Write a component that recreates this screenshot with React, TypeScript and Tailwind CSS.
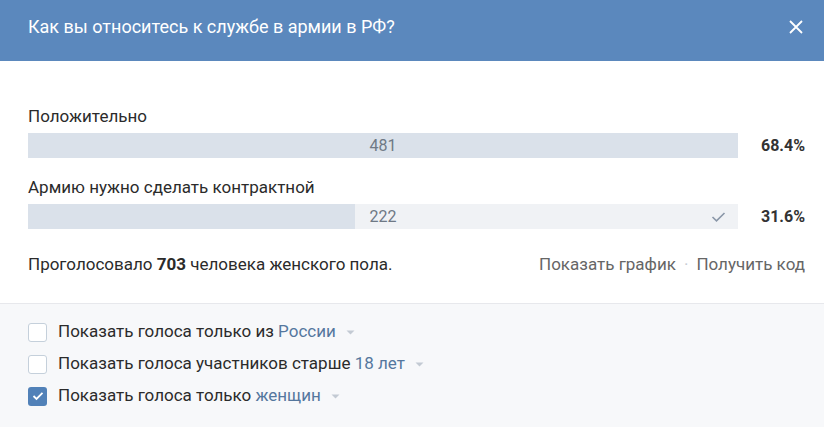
import { useState } from "react";

const font = { fontFamily: "Roboto, 'Noto Sans', sans-serif" };

type Answer = { text: string; votes: number; percent: string; share: number; mine?: boolean };

const answers: Answer[] = [
  { text: "Положительно", votes: 481, percent: "68.4%", share: 100 },
  { text: "Армию нужно сделать контрактной", votes: 222, percent: "31.6%", share: 46.1, mine: true },
];

function Bar({ a }: { a: Answer }) {
  return (
    <div className="mb-[19px]">
      <p className="h-[20px] text-[17px] leading-[20px] text-[#2b2b2b]">{a.text}</p>
      <div className="mt-[7px] flex items-center">
        <div className="relative h-[25px] w-[710px] bg-[#f0f2f5]">
          <div className="h-full bg-[#dae1ea]" style={{ width: `${a.share}%` }} />
          <span className="absolute inset-0 flex items-center justify-center text-[16px] text-[#6f7985]">
            {a.votes}
          </span>
          {a.mine ? (
            <svg className="absolute right-[12px] top-[7px]" width="15" height="12" viewBox="0 0 15 12">
              <path d="M1.5 6l4 3.8L13.5 2" fill="none" stroke="#8a97a8" strokeWidth="1.6" />
            </svg>
          ) : null}
        </div>
        <span className="ml-auto text-[16px] font-bold text-[#333]">{a.percent}</span>
      </div>
    </div>
  );
}

function Check({ checked, label, accent }: { checked: boolean; label: string; accent: string }) {
  const [on, setOn] = useState(checked);
  return (
    <button type="button" onClick={() => setOn(!on)} className="flex h-[32px] items-center text-left">
      {on ? (
        <span className="flex h-[19px] w-[19px] items-center justify-center rounded-[3px] bg-[#5181b8]">
          <svg width="12" height="10" viewBox="0 0 12 10">
            <path d="M1.5 5l3 3L10.5 1.8" fill="none" stroke="#fff" strokeWidth="1.8" />
          </svg>
        </span>
      ) : (
        <span className="h-[19px] w-[19px] rounded-[3px] border border-[#c5d0db] bg-white" />
      )}
      <span className="ml-[11px] text-[17px] text-[#2b2b2b]">
        {label} <span className="text-[#55779e]">{accent}</span>
      </span>
      <svg className="ml-[10px]" width="9" height="5" viewBox="0 0 9 5">
        <path d="M0.5 0.5h8L4.5 4.5z" fill="#c3cad3" />
      </svg>
    </button>
  );
}

export default function App() {
  return (
    <div className="h-[427px] w-[824px] bg-white" style={font}>
      <div className="flex h-[61px] items-start bg-[#5b88bd] pl-[28px] pr-[20px] pt-[16px]">
        <h1 className="text-[18px] leading-[22px] text-white">Как вы относитесь к службе в армии в РФ?</h1>
        <svg className="ml-auto mt-[3px]" width="16" height="16" viewBox="0 0 16 16">
          <path d="M2 2l12 12M14 2L2 14" stroke="#fff" strokeWidth="1.8" />
        </svg>
      </div>

      <div className="pl-[28px] pr-[19px] pt-[45px]">
        {answers.map((a) => (
          <Bar key={a.text} a={a} />
        ))}
        <div className="mt-[25px] flex h-[22px] items-center text-[17px]">
          <p className="text-[#2b2b2b]">
            Проголосовало <b>703</b> человека женского пола.
          </p>
          <div className="ml-auto flex items-center text-[#666]">
            <a>Показать график</a>
            <span className="mx-[8px] text-[#c5cbd2]">·</span>
            <a>Получить код</a>
          </div>
        </div>
      </div>

      <div className="mt-[27px] h-[124px] border-t border-[#e7e8ec] bg-[#f7f8fa] pl-[28px] pt-[12px]">
        <Check checked={false} label="Показать голоса только из" accent="России" />
        <Check checked={false} label="Показать голоса участников старше" accent="18 лет" />
        <Check checked label="Показать голоса только" accent="женщин" />
      </div>
    </div>
  );
}
